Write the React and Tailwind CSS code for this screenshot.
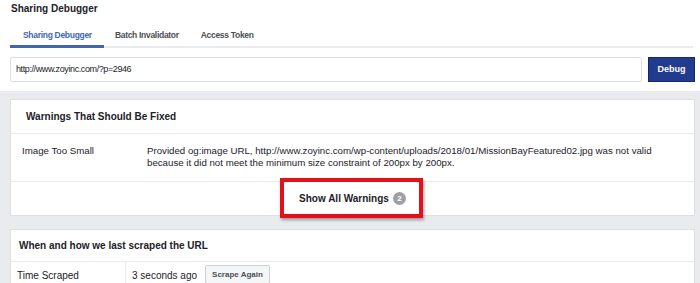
import React from 'react';

const App = () => {
  return (
    <div className="w-[700px] h-[283px] overflow-hidden bg-white font-['Liberation_Sans',Arial,sans-serif] text-[#1d2129]">
      {/* Top header */}
      <div className="pl-[11px] pt-[1px]">
        <h1 className="text-[10px] font-bold leading-[15px] text-[#1d2129]">Sharing Debugger</h1>
      </div>

      {/* Tabs */}
      <div className="mt-[13px] ml-[10px] mr-[7px] flex border-b-2 border-[#e9ebee] text-[8.5px] tracking-[-0.3px] leading-[12px] font-bold">
        <div className="relative pl-[13px] pr-[12px] pb-[5px] text-[#4267b2]">
          Sharing Debugger
          <span className="absolute left-0 right-0 -bottom-[2px] h-[3px] bg-[#4267b2]"></span>
        </div>
        <div className="px-[11px] pb-[5px] text-[#4b4f56]">Batch Invalidator</div>
        <div className="px-[11px] pb-[5px] text-[#4b4f56]">Access Token</div>
      </div>

      {/* URL input */}
      <div className="mt-[9px] ml-[10px] mr-[5px] flex gap-[6px]">
        <div className="flex-1 h-[25px] flex items-center border border-[#dddfe2] rounded-[2px] px-[5px] text-[9px] tracking-[-0.4px] text-[#1d2129]">
          http://www.zoyinc.com/?p=2946
        </div>
        <button className="w-[47px] h-[25px] bg-[#213b8e] border border-[#14286b] text-white text-[9px] font-bold">
          Debug
        </button>
      </div>

      {/* Gray content area */}
      <div className="mt-[9px] bg-[#e9ebee] pt-[8px] pl-[10px] pr-[5px] pb-[20px] flex flex-col gap-[13px]">
        {/* Warnings card */}
        <div className="bg-white border border-[#dddfe2]">
          <div className="h-[34px] flex items-center pl-[15px] text-[10px] font-bold text-[#1d2129] border-b border-[#e9ebee]">
            Warnings That Should Be Fixed
          </div>
          <div className="h-[48px] flex pt-[11px] border-b border-[#e9ebee] text-[9.7px] leading-[12px] text-[#1d2129]">
            <div className="w-[136px] pl-[11px] shrink-0">Image Too Small</div>
            <div className="pr-[20px]">
              Provided og:image URL, http://www.zoyinc.com/wp-content/uploads/2018/01/MissionBayFeatured02.jpg was not valid because it did not meet the minimum size constraint of 200px by 200px.
            </div>
          </div>
          <div className="h-[33px] flex items-center justify-center">
            <div className="relative flex items-center gap-[4px] text-[10px] leading-[15px] font-bold text-[#1d2129]">
              Show All Warnings
              <span className="w-[13px] h-[13px] rounded-full bg-[#9da1a6] text-white text-[8px] flex items-center justify-center">2</span>
              <span className="absolute -left-[19px] -right-[17px] -top-[13px] -bottom-[12px] border-[4px] border-[#e4101c] shadow-[1px_2px_3px_rgba(0,0,0,0.35)]"></span>
            </div>
          </div>
        </div>

        {/* Scrape card */}
        <div className="bg-white border border-[#dddfe2]">
          <div className="h-[32px] flex items-center pl-[8px] text-[10px] font-bold text-[#1d2129] border-b border-[#e9ebee]">
            When and how we last scraped the URL
          </div>
          <div className="flex text-[10px] text-[#1d2129]">
            <div className="w-[115px] pl-[6px] pt-[6px] border-r border-[#e9ebee] shrink-0">Time Scraped</div>
            <div className="flex items-start gap-[8px] pl-[6px] pt-[3px]">
              <span className="pt-[3px]">3 seconds ago</span>
              <button className="h-[19px] px-[6px] bg-[#f5f6f7] border border-[#ccd0d5] rounded-[2px] text-[8px] font-bold text-[#4b4f56]">
                Scrape Again
              </button>
            </div>
          </div>
        </div>
      </div>
    </div>
  );
};

export default App;
